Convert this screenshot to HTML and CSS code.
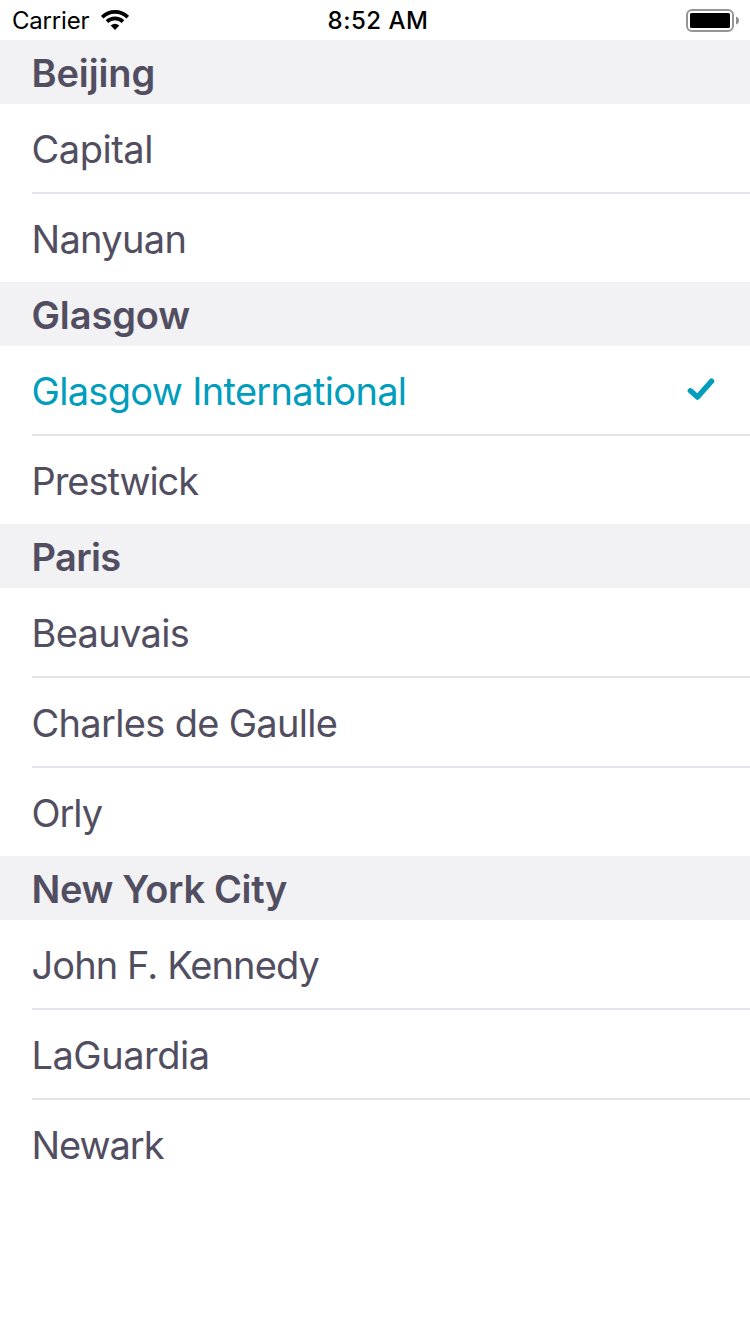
FILE: index.html
```html
<!DOCTYPE html>
<html lang="en">
<head>
<meta charset="utf-8">
<title>Airports</title>
<link rel="stylesheet" href="styles.css">
</head>
<body>
<header class="status">
  <div class="status-left"><span class="carrier">Carrier</span>
    <svg class="wifi" width="28" height="20" viewBox="0 0 28 20"><g fill="none" stroke="#000" stroke-width="3.700"><path d="M1.200 7.200A18 18 0 0 1 26.800 7.200"/><path d="M6 11.700A11.500 11.500 0 0 1 22 11.700"/></g><path d="M9.700 15.600Q14 11.800 18.300 15.600L14 20Z"/></svg>
  </div>
  <span class="time">8:52 AM</span>
  <svg class="battery" width="54" height="23" viewBox="0 0 54 23"><rect x="1" y="1" width="46" height="21" rx="5" fill="none" stroke="#959595" stroke-width="2"/><rect x="4" y="4" width="40" height="15" rx="1.500"/><path d="M50 7.500q3 1.200 3 4t-3 4z" fill="#8e8e8e"/></svg>
</header>
<main>
  <h2 class="city">Beijing</h2>
  <ul class="list"><li class="row wide">Capital</li><li class="row">Nanyuan</li></ul>
  <h2 class="city">Glasgow</h2>
  <ul class="list"><li class="row selected">Glasgow International
    <svg class="check" width="28" height="24" viewBox="0 0 28 24"><path d="M3.400 12.800L10.500 19L24.500 3.200" fill="none" stroke="#009dbd" stroke-width="5.500" stroke-linecap="round" stroke-linejoin="round"/></svg></li><li class="row narrow">Prestwick</li></ul>
  <h2 class="city city-narrow">Paris</h2>
  <ul class="list"><li class="row">Beauvais</li><li class="row">Charles de Gaulle</li><li class="row narrow">Orly</li></ul>
  <h2 class="city city-medium">New York City</h2>
  <ul class="list"><li class="row medium">John F. Kennedy</li><li class="row wide">LaGuardia</li><li class="row narrow">Newark</li></ul>
</main>
</body>
</html>
```
FILE: styles.css
```css
* { box-sizing: border-box; }
body { margin: 0; background: #fff; color: #524e61; font-family: Inter, sans-serif; }
.status { height: 40px; display: grid; grid-template-columns: 1fr auto 1fr; align-items: center; padding: 0 10px 0 12px; color: #000; font-size: 24px; }
.status-left { display: flex; align-items: center; gap: 12px; }
.carrier { width: 77px; letter-spacing: -0.2px; padding-top: 1px; }
.time { font-weight: 500; letter-spacing: 0.5px; padding: 1px 0 0 4px; }
.battery { justify-self: end; }
.city { margin: 0; height: 64px; padding: 1px 32px 0 31.5px; line-height: 64px; font-size: 38px; font-weight: 600; letter-spacing: -0.1px; background: #f2f2f4; }
.city-narrow { letter-spacing: -0.65px; }
.city-medium { letter-spacing: -0.35px; }
.list { margin: 0; padding: 0 0 0 32px; list-style: none; }
.row { height: 90px; padding: 2px 35px 0 0; display: flex; align-items: center; justify-content: space-between; font-size: 38px; letter-spacing: -0.68px; text-indent: -0.5px; border-bottom: 2px solid #e4e3e9; }
.row:last-child { height: 88px; border-bottom: 0; }
.wide { letter-spacing: -0.48px; }
.medium { letter-spacing: -0.9px; }
.narrow { letter-spacing: -1.05px; }
.selected { color: #009dbd; }
.check { margin-bottom: 2px; }
```
